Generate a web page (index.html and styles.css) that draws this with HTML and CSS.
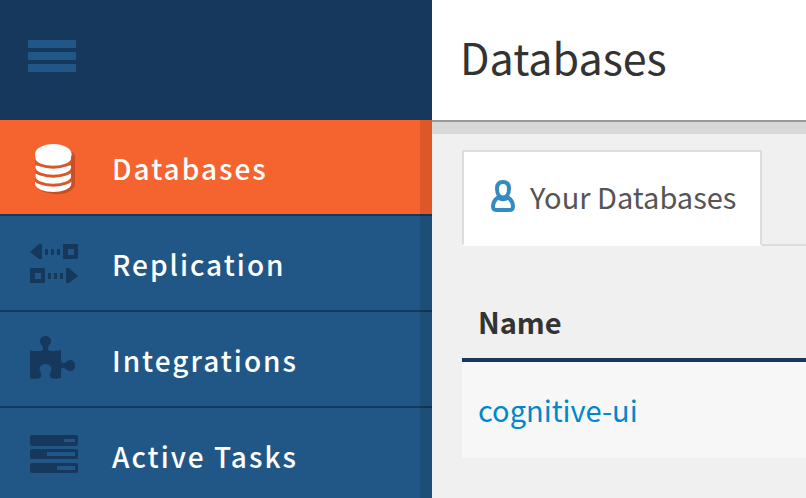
FILE: index.html
```html
<!DOCTYPE html>
<html lang="en">
<head>
<meta charset="utf-8">
<title>Databases</title>
<link rel="stylesheet" href="styles.css">
</head>
<body>
<div class="app">
  <aside class="sidebar">
    <div class="sidebar-top">
      <button class="menu-button" type="button" aria-label="Toggle menu">
        <span class="bar"></span><span class="bar"></span><span class="bar"></span>
      </button>
    </div>
    <nav class="nav">
      <a class="nav-item active" href="#databases">
        <svg class="icon" viewBox="0 0 52 56" aria-hidden="true">
          <path fill="#c55026" d="M10 12 H45 Q47 14 47 18 V45 C45 52 35 55 26 54 C17 53 12 51 10 48 Z"/>
          <g fill="#fff">
            <path d="M7 38v6c2 10.500 34.500 10.500 36.500 0v-6z"/>
            <path stroke="#d95728" stroke-width="3" d="M6 32v5c2 11 36.500 11 38.500 0v-5z"/>
            <path stroke="#d95728" stroke-width="3" d="M6 24v4c2 11 36.500 11 38.500 0v-4z"/>
            <path stroke="#d95728" stroke-width="3" d="M6 14v5c2 11 36.500 11 38.500 0v-5z"/>
          </g>
          <path fill="#f5632e" d="M4 12h3v34h-3z"/>
          <path fill="#c55026" d="M43.500 15h3v30h-3z"/>
          <ellipse cx="25.300" cy="14.300" rx="18.300" ry="10.300" fill="#fff"/>
        </svg>
        <span>Databases</span>
      </a>
      <a class="nav-item" href="#replication">
        <svg class="icon" viewBox="0 0 52 56" aria-hidden="true">
          <path d="M2 16L11 8h3v15h-3zM17 13h3v6h-3zM23 13h3v6h-3zM29 13h3v6h-3zM50 40l-9-8h-3v15h3zM20 37h3v6h-3zM26 37h3v6h-3zM32 37h3v6h-3z"/>
          <path fill-rule="evenodd" d="M35 8h15v15H35zM40 13v6h6v-6zM2 32h15v15H2zM7 37v6h6v-6z"/>
        </svg>
        <span>Replication</span>
      </a>
      <a class="nav-item" href="#integrations">
        <svg class="icon" viewBox="0 0 52 56" aria-hidden="true">
          <path d="M2 18.500C7 19 11 19.500 14 18.500C16 17.500 15 15 13.500 13C10 8 13 4 17.500 4S25 8 21.500 13C20 15 19 17.500 21 18.500C24 19.500 28 19 33 18V27C33 31 35 32 37.500 30.500C42 26 47 28 47 33.500S42 41 37.500 37C35 35 33 35 33 39V46C29 47 26 47 23 46C21 44.500 21.500 42 22.500 40C25 36 22 32 17.500 32S10 36 12.500 40C13.500 42 14 44.500 12 46C9 47 6 47 2 46.500Z"/>
        </svg>
        <span>Integrations</span>
      </a>
      <a class="nav-item" href="#active-tasks">
        <svg class="icon" viewBox="0 0 52 56" aria-hidden="true">
          <path fill-rule="evenodd" d="M4 7h44q2 0 2 2v7q0 2-2 2H4q-2 0-2-2V9q0-2 2-2zM36 11v3h11v-3zM4 21h44q2 0 2 2v6q0 2-2 2H4q-2 0-2-2v-6q0-2 2-2zM19 24v4h28v-4zM4 35h44q2 0 2 2v6q0 2-2 2H4q-2 0-2-2v-6q0-2 2-2zM29 38v4h18v-4z"/>
        </svg>
        <span>Active Tasks</span>
      </a>
    </nav>
  </aside>
  <main class="main">
    <header class="header"><h1>Databases</h1></header>
    <div class="content">
      <div class="tabs">
        <a class="tab" href="#your-databases">
          <svg class="user-icon" viewBox="0 0 26 34" aria-hidden="true">
            <g fill="none" stroke="#338bc2" stroke-width="4">
              <path d="M13 3C8.500 3 7 5.500 7 9.500C7 16 10 18.500 13 18.500S19 16 19 9.500C19 5.500 17.500 3 13 3Z"/>
              <path d="M8 18.500C5 20.500 3 23.500 3 27.500C3 30.500 4.500 31 7 31H19C21.500 31 23 30.500 23 27.500C23 23.500 21 20.500 18 18.500C15 20.500 11 20.500 8 18.500Z"/>
            </g>
          </svg>
          <span>Your Databases</span>
        </a>
      </div>
      <table class="databases">
        <thead><tr><th scope="col">Name</th></tr></thead>
        <tbody><tr><td><a href="#cognitive-ui">cognitive-ui</a></td></tr></tbody>
      </table>
    </div>
  </main>
</div>
</body>
</html>
```

FILE: styles.css
```css
* {
  box-sizing: border-box;
}

body {
  margin: 0;
  overflow: hidden;
  background: #f0f0f0;
  color: #333;
  font-family: "Noto Sans CJK SC", "Noto Sans", sans-serif;
  font-size: 29px;
  line-height: 40px;
}

a {
  text-decoration: none;
}

.app {
  display: flex;
  min-height: 100vh;
}

.sidebar {
  flex: 0 0 432px;
  height: 100vh;
  overflow: hidden;
  background: #215786;
}

.sidebar-top {
  display: flex;
  align-items: center;
  height: 120px;
  padding: 0 28px 8px;
  background: #17385d;
}

.menu-button {
  display: flex;
  flex-direction: column;
  gap: 4px;
  width: 48px;
  padding: 0;
  border: 0;
  background: none;
}

.bar {
  height: 8px;
  background: #215786;
}

.nav {
  position: relative;
}

.nav::after {
  content: "";
  position: absolute;
  inset: 0 0 0 auto;
  width: 12px;
  background: rgba(0, 0, 0, 0.1);
}

.nav-item {
  display: flex;
  align-items: center;
  gap: 32px;
  height: 96px;
  padding: 2px 28px 0;
  border-bottom: 2px solid #17385d;
  color: #fff;
  font-size: 28px;
  font-weight: 500;
  letter-spacing: 2px;
}

.nav-item.active {
  background: #f5632e;
}

.icon {
  flex: none;
  width: 52px;
  height: 56px;
  fill: #17385d;
}

.main {
  flex: 1;
  min-width: 0;
}

.header {
  display: flex;
  align-items: center;
  height: 122px;
  padding: 0 28px 8px;
  border-bottom: 2px solid #999;
  background: #fff;
}

h1 {
  margin: 0;
  font-size: 43px;
  font-weight: 400;
  line-height: 64px;
}

.content {
  padding: 16px 0 0 30px;
  border-top: 12px solid #d8d8d8;
}

.tabs {
  display: flex;
}

.tabs::after {
  content: "";
  flex: 1;
  border-bottom: 2px solid #ddd;
}

.tab {
  display: flex;
  align-items: center;
  gap: 14px;
  height: 96px;
  padding: 0 24px 4px 26px;
  border: 2px solid #ddd;
  border-bottom-color: #fff;
  background: #fff;
  color: #555;
}

.user-icon {
  width: 26px;
  height: 34px;
}

.databases {
  width: 100%;
  margin-top: 40px;
  border-collapse: separate;
  border-spacing: 0;
  text-align: left;
}

th {
  height: 76px;
  padding: 0 16px 2px;
  border-bottom: 4px solid #17385d;
  font-weight: 700;
}

td {
  height: 96px;
  padding: 0 16px 2px;
  background: #f7f7f7;
}

td a {
  color: #0088cc;
}
```
